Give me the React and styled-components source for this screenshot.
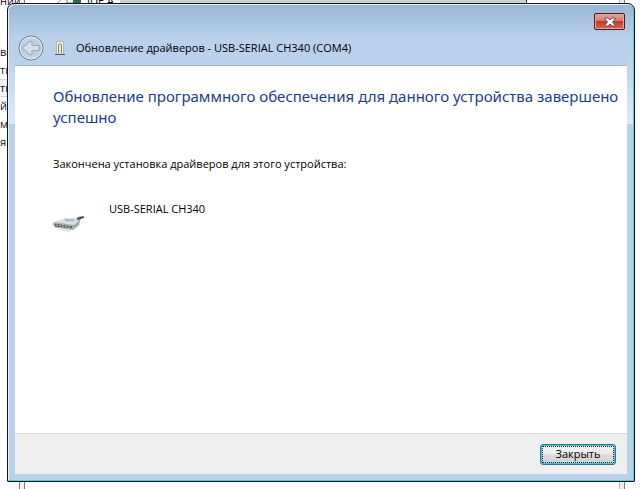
import React from "react";
import styled, { createGlobalStyle } from "styled-components";

const Global = createGlobalStyle`
  * { box-sizing: border-box; }
  body { margin: 0; background: #fff; font: 11px/16px "Open Sans", "Noto Sans", sans-serif; color: #000; }
  h1, h2, p, ul { margin: 0; padding: 0; font-weight: 400; }
`;
const Desktop = styled.div`
  position: relative;
  height: 100vh;
  overflow: hidden;
  display: flex;
`;
const SideMenu = styled.ul`
  list-style: none;
  width: 19px;
`;
const SideTop = styled.li`
  height: 43px;
  line-height: 2px;
  color: #1b1036;
`;
const SideItem = styled.li`
  height: 18px;
  line-height: 16px;
  color: #1b1036;
  border: solid ${(p) => (p.$selected ? "#d9d9d9" : "transparent")};
  border-width: 1px 0;
  background: ${(p) => (p.$selected ? "#f3f3f3" : "transparent")};
`;
const TreeWindow = styled.div`
  flex: 1;
  margin-right: 17px;
  border: solid #7b7b7b;
  border-width: 0 1px;
  box-shadow: inset 4px 0 #f0f0f0, inset 5px 0 #777, inset -4px 0 #ececec, inset -5px 0 #b5b5b5;
  display: flex;
`;
const Tree = styled.div`
  flex: 1;
  display: flex;
  gap: 6px;
  padding-left: 35px;
  line-height: 1px;
`;
const TreePane = styled.div`
  width: 16%;
`;
const TreeSelection = styled.div`
  flex: 1;
  height: 6px;
  background: #ccd1d8;
  border-right: 1px solid #333;
`;
const Dialog = styled.section`
  position: absolute;
  inset: 3px 7px 7px;
  display: flex;
  flex-direction: column;
  padding: 0 7px 7px;
  border: 1px solid #11181d;
  border-radius: 7px 7px 1px 1px;
  box-shadow: inset -1px -1px #5fc8df, inset 1px 1px #e6f1fa;
  background:
    linear-gradient(#b9d1ea00, #dceaf7) left 50px / 7px 70px no-repeat,
    linear-gradient(#b9d1ea00, #dceaf7) right 50px / 7px 70px no-repeat,
    linear-gradient(#9ab5d3, #b9d1ea 34px);
`;
const CaptionRow = styled.div`
  height: 26px;
  display: flex;
  justify-content: flex-end;
  align-items: flex-end;
  padding-right: 2px;
`;
const CloseX = styled.button`
  width: 31px;
  height: 17px;
  padding: 0;
  display: grid;
  place-items: center;
  border: 1px solid #4b1a22;
  border-radius: 2px;
  box-shadow: inset 0 0 0 1px #e9a79c;
  background: linear-gradient(#e6a396, #d6796a 48%, #bd3a27 50%, #d5694e);
`;
const TitleRow = styled.header`
  height: 35px;
  display: flex;
  align-items: center;
  gap: 10px;
  padding-left: 3px;
`;
const Back = styled.button`
  width: 26px;
  height: 26px;
  padding: 0;
  border: 0;
  background: none;
  display: grid;
`;
const Title = styled.h1`
  font-size: 11px;
  line-height: 16px;
`;
const Body = styled.main`
  flex: 1;
  padding: 20px 4px 16px 38px;
  background: #fff;
  border-top: 1px solid #a3b8cd;
`;
const Heading = styled.h2`
  color: #1b3c93;
  font-family: "Noto Sans", sans-serif;
  font-size: 15px;
  line-height: 21px;
`;
const Note = styled.p`
  margin-top: 28px;
`;
const Device = styled.div`
  display: flex;
  gap: 24px;
  margin-top: 29px;
`;
const DeviceIcon = styled.svg`
  width: 32px;
  height: 32px;
  margin-top: 5px;
`;
const Footer = styled.footer`
  height: 41px;
  display: flex;
  justify-content: flex-end;
  align-items: center;
  padding-right: 11px;
  background: #efefef;
  border-top: 1px solid #dcdcde;
`;
const CloseButton = styled.button`
  width: 76px;
  height: 21px;
  padding: 0;
  font: inherit;
  border: 1px solid #2b7595;
  border-radius: 3px;
  box-shadow: inset 0 0 0 1px #4dc0e4;
  outline: 1px dotted #222;
  outline-offset: -3px;
  background: linear-gradient(#f3f3f3, #ebebeb 49%, #dcdcdc 51%, #d0d0d0);
`;

const items = ["ва", "ть", "тв", "йс", "ми", "я"];

export default function App() {
  return (
    <>
      <Global />
      <Desktop>
        <SideMenu>
          <SideTop>ний</SideTop>
          {items.map((t) => (
            <SideItem key={t} $selected={t === "тв"}>{t}</SideItem>
          ))}
        </SideMenu>
        <TreeWindow>
          <Tree>
            <svg width="26" height="4" viewBox="0 0 26 4">
              <path d="M1 4L6 0" stroke="#999" />
              <path d="M12 0V3H18" fill="none" stroke="#6f7478" />
              <path d="M18 0H26V3H18Z" fill="#2f6b45" />
            </svg>
            <span>IDE A</span>
            <TreeSelection />
          </Tree>
          <TreePane />
        </TreeWindow>
        <Dialog>
          <CaptionRow>
            <CloseX aria-label="Закрыть окно">
              <svg width="12" height="10" viewBox="0 0 12 10">
                <path d="M1 1H4L6 3L8 1H11V2L8.500 5L11 8V9H8L6 7L4 9H1V8L3.500 5L1 2Z" fill="#fff" stroke="#555c6c" />
              </svg>
            </CloseX>
          </CaptionRow>
          <TitleRow>
            <Back aria-label="Назад">
              <svg width="26" height="26" viewBox="0 0 26 26">
                <defs>
                  <linearGradient id="disc" x2="0" y2="1">
                    <stop stopColor="#cddbe9" />
                    <stop offset=".5" stopColor="#b3c6d9" />
                    <stop offset="1" stopColor="#c9dbeb" />
                  </linearGradient>
                </defs>
                <circle cx="13" cy="13" r="12" fill="url(#disc)" stroke="#5c7085" />
                <circle cx="13" cy="13" r="11" fill="none" stroke="#e2edf6" />
                <path d="M4.500 13L11.500 6.500H14V10.500H21V15.500H14V19.500H11.500Z" fill="#d3dfe9" stroke="#93a9bc" strokeLinejoin="round" />
              </svg>
            </Back>
            <svg width="12" height="16" viewBox="0 0 12 16">
              <path d="M2.500 1.500H9.500V14H2.500Z" fill="#f7f6ee" stroke="#b5b3a6" />
              <path d="M4.500 13V4.500Q6 2.500 7.500 4.500V13" fill="#e9ead8" stroke="#7f8560" />
              <path d="M1 14.500H11" stroke="#55575a" />
            </svg>
            <Title>Обновление драйверов - USB-SERIAL CH340 (COM4)</Title>
          </TitleRow>
          <Body>
            <Heading>Обновление программного обеспечения для данного устройства завершено успешно</Heading>
            <Note>Закончена установка драйверов для этого устройства:</Note>
            <Device>
              <DeviceIcon viewBox="0 0 32 32" aria-hidden="true">
                <path d="M2 23L16 26L29 17L24 21Z" fill="#e4e6e8" />
                <path d="M21 15L25 11L30 10L31 12L28 13L25 16Z" fill="#747b82" />
                <path d="M25 12H28M27 12L31 11" stroke="#34383c" />
                <path d="M0 17L13 12L21 12L27 15L26 19L20 24L2 21L0 19Z" fill="#9fa8b0" />
                <path d="M1 16L13 12L21 12L26 15L21 19Z" fill="#dce1e5" />
                <path d="M11 13L20 13L22 15L13 16Z" fill="#b4bcc3" />
                <path d="M1 17L20 20L19 23L2 21Z" fill="#50565b" stroke="#b3bac0" />
                <path d="M3 19L18 21.500" stroke="#e3d790" strokeWidth="1" strokeDasharray="2 1" />
              </DeviceIcon>
              <p>USB-SERIAL CH340</p>
            </Device>
          </Body>
          <Footer>
            <CloseButton>Закрыть</CloseButton>
          </Footer>
        </Dialog>
      </Desktop>
    </>
  );
}
